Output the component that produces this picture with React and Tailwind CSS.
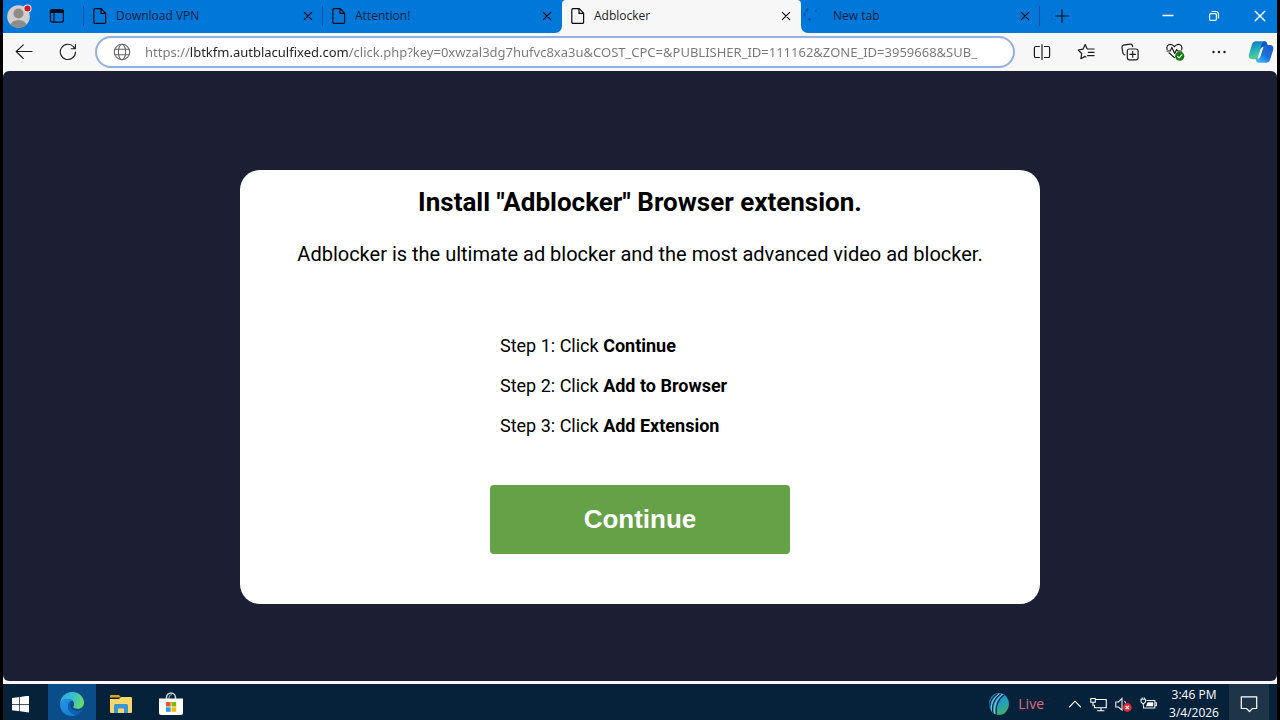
import React from 'react';

const URL_TEXT =
  'https://lbtkfm.autblaculfixed.com/click.php?key=0xwzal3dg7hufvc8xa3u&COST_CPC=&PUBLISHER_ID=111162&ZONE_ID=3959668&SUB_';

function Line({ size = 18, className = '', width = 1.2, children, box = 18 }) {
  return (
    <svg
      width={size}
      height={size}
      viewBox={`0 0 ${box} ${box}`}
      fill="none"
      stroke="currentColor"
      strokeWidth={width}
      strokeLinecap="round"
      strokeLinejoin="round"
      className={`shrink-0 ${className}`}
      aria-hidden="true"
    >
      {children}
    </svg>
  );
}

function PageIcon() {
  return (
    <Line size={16} box={16} width={1.2}>
      <path d="M3 .7h6.200l4.400 4.500v9a1.200 1.200 0 0 1-1.200 1.200H3a1.200 1.200 0 0 1-1.200-1.200V1.900A1.200 1.200 0 0 1 3 .7zM9 .9v4.500h4.500" />
    </Line>
  );
}

function SpinnerIcon() {
  return (
    <svg width="16" height="16" viewBox="0 0 16 16" className="shrink-0 text-[#07509f]" fill="currentColor" aria-hidden="true">
      <ellipse cx="6" cy="2" rx="1" ry="2" transform="rotate(35 6 2)" />
      <ellipse cx="3.500" cy="6.500" rx="1" ry="2" />
      <circle cx="15" cy="3" r="1" />
      <ellipse cx="8.500" cy="11.500" rx="1.700" ry="1.300" transform="rotate(40 8.500 11.500)" />
    </svg>
  );
}

function Tab({ title, active, loading, last }) {
  return (
    <li
      className={`relative flex w-[239px] min-w-0 items-center pl-2 pr-[7px] ${
        active ? 'h-[33px] rounded-t bg-[#f7f7f7] pb-px text-[#222]' : 'h-8 text-[#06203f]'
      }`}
    >
      {active && (
        <>
          <svg width="7" height="7" viewBox="0 0 7 7" className="absolute bottom-0 -left-[7px]" aria-hidden="true">
            <path d="M7 0v7H0a7 7 0 0 0 7-7z" fill="#f7f7f7" />
          </svg>
          <svg width="7" height="7" viewBox="0 0 7 7" className="absolute bottom-0 -right-[7px]" aria-hidden="true">
            <path d="M0 0v7h7a7 7 0 0 1-7-7z" fill="#f7f7f7" />
          </svg>
        </>
      )}
      <button type="button" className="flex min-w-0 flex-1 items-center gap-2 text-left">
        <span className={loading ? '-ml-2 mr-2 flex' : 'flex text-[#0a0a14]'}>{loading ? <SpinnerIcon /> : <PageIcon />}</span>
        <span className="truncate text-[12px] leading-5">{title}</span>
      </button>
      <button type="button" aria-label={`Close ${title}`} className="flex h-4 w-4 items-center justify-center text-[#0a0a14]">
        <Line size={10} box={10} width={1.2}>
          <path d="M1.300 1.300l7.400 7.400M8.700 1.300L1.300 8.700" />
        </Line>
      </button>
      {last && <span className="absolute right-0 h-5 w-px bg-[#07509f]" />}
    </li>
  );
}

function TabBar() {
  return (
    <header className="flex h-[33px] shrink-0 items-start bg-[#0078d9]">
      <div className="flex h-8 w-20 shrink-0 items-center">
        <button type="button" aria-label="Profile" className="ml-1 flex">
          <svg width="26" height="26" viewBox="0 0 26 26" aria-hidden="true">
            <clipPath id="face">
              <circle cx="11.5" cy="13.5" r="11.3" />
            </clipPath>
            <circle cx="11.5" cy="13.5" r="11.3" fill="#d0cecd" />
            <g clipPath="url(#face)" fill="#8e8b89">
              <circle cx="11.5" cy="10.5" r="5" />
              <ellipse cx="11.5" cy="22.5" rx="7.8" ry="5.5" />
            </g>
            <circle cx="20.5" cy="5.5" r="4" fill="#e9e9ee" />
            <circle cx="20.5" cy="5.5" r="3" fill="#d80f1e" />
          </svg>
        </button>
        <button type="button" aria-label="Tab actions" className="ml-4 flex text-[#04101f]">
          <svg width="16" height="16" viewBox="0 0 16 16" fill="none" stroke="currentColor" strokeWidth="1.2" aria-hidden="true">
            <rect x="1.4" y="1.6" width="13" height="12.6" rx="2" />
            <path d="M1.4 4.500V3.6a2 2 0 0 1 2-2h9a2 2 0 0 1 2 2v.9z" fill="currentColor" />
            <path d="M5 5v9" />
          </svg>
        </button>
      </div>
      <ul className="flex min-w-0 items-start">
        <li className="mt-1.5 h-5 w-px shrink-0 bg-[#07509f]" />
        <Tab title="Download VPN" last />
        <Tab title="Attention!" />
        <Tab title="Adblocker" active />
        <Tab title="New tab" loading last />
      </ul>
      <button type="button" aria-label="New tab" className="ml-3.5 flex h-8 items-center text-[#04101f]">
        <Line size={16} box={16} width={1.2}>
          <path d="M8 1.500v13M1.500 8h13" />
        </Line>
      </button>
      <div className="-mr-1.5 ml-auto flex h-8 shrink-0 text-white">
        <button type="button" aria-label="Minimize" className="flex w-[46px] items-center justify-center">
          <Line size={12} box={12} width={1.3}>
            <path d="M1 5.500h10" />
          </Line>
        </button>
        <button type="button" aria-label="Restore" className="flex w-[46px] items-center justify-center">
          <Line size={12} box={12} width={1.2}>
            <rect x="1.6" y="3.6" width="6.8" height="6.8" rx="1.2" />
            <path d="M4 1.5h4a2.5 2.5 0 0 1 2.5 2.5v4" />
          </Line>
        </button>
        <button type="button" aria-label="Close window" className="flex w-[46px] items-center justify-center">
          <Line size={12} box={12} width={1.4}>
            <path d="M1.2 1.2l9.6 9.6M10.8 1.2l-9.6 9.6" />
          </Line>
        </button>
      </div>
    </header>
  );
}

function CopilotIcon() {
  return (
    <svg width="26" height="26" viewBox="0 0 26 26" aria-hidden="true">
      <defs>
        <linearGradient id="cpA" x1="0" y1="0" x2="0.3" y2="1">
          <stop offset="0" stopColor="#1270c8" />
          <stop offset=".45" stopColor="#1fa6c4" />
          <stop offset="1" stopColor="#5fd08c" />
        </linearGradient>
        <linearGradient id="cpB" x1="1" y1="0" x2="0.3" y2="1">
          <stop offset="0" stopColor="#1f56c9" />
          <stop offset=".6" stopColor="#1c70dc" />
          <stop offset="1" stopColor="#3cb3f2" />
        </linearGradient>
      </defs>
      <path d="M8 2.3h8.5c1.7 0 2.5 1 3 2.6l.7 2.3h-3.4c-1.8 0-2.7 1-3.2 2.7l-2.6 8.3c-.4 1.300-1.200 2-2.500 2H4.200C1.200 20.200.300 18 1 15.300l3-10C4.600 3.300 6 2.300 8 2.300z" fill="url(#cpA)" />
      <path d="M18 23.700H11c-1.700 0-2.500-1-3-2.600L7.300 19h2c1.600 0 2.400-.9 2.900-2.500l2.700-8.400c.4-1.300 1.200-2 2.500-2h4.500c3 0 3.900 2.200 3.200 4.900l-3 9.700c-.6 2-2.100 3-4.100 3z" fill="url(#cpB)" />
      <path d="M15 8.200c.4-1.300 1.300-2.100 2.600-2.100h1.700l-.8-2c-.3-1-.9-1.700-2-1.800-1.500 0-2.300 1-2.800 2.600l-3 9.800z" fill="#1257bd" />
      <path d="M15.600 7.800l-3.200 9.600c-.5 1.400-1.300 2.300-2.900 2.400l2.300-8c.7-2.200 1.700-3.600 3.800-4z" fill="#e6f7fb" />
    </svg>
  );
}

function Toolbar() {
  return (
    <nav className="flex h-[38px] shrink-0 items-center bg-[#f7f7f7] text-[#1c1c1c]">
      <button type="button" aria-label="Back" className="ml-3 flex">
        <Line width={1.1}>
          <path d="M17 8.500H1.500M8.300 1.800L1.200 8.500l7.100 7" />
        </Line>
      </button>
      <button type="button" aria-label="Refresh" className="ml-[26px] flex">
        <Line width={1.1}>
          <path d="M16.500 9A7.600 7.600 0 1 1 14.700 4L16.200 5.600M16.400 1.500v4.200h-4.200" />
        </Line>
      </button>
      <div className="ml-[18px] flex h-8 min-w-0 flex-1 items-center rounded-full border-2 border-[#91afe3] bg-white px-4">
        <Line className="mr-3.5 text-[#666]" width={1.1}>
          <circle cx="9" cy="9" r="7.700" />
          <ellipse cx="9" cy="9" rx="3.600" ry="7.700" />
          <path d="M1.900 6.200h14.200M1.900 11.800h14.200" />
        </Line>
        <input
          type="text"
          aria-label="Address"
          defaultValue={URL_TEXT}
          className="min-w-0 flex-1 bg-[linear-gradient(to_right,#767676_45px,#1f1f1f_45px,#1f1f1f_203px,#767676_203px)] bg-clip-text font-['Noto_Sans',sans-serif] text-[13px] leading-6 text-transparent outline-none"
        />
      </div>
      <div className="ml-[18px] flex shrink-0 items-center gap-[26px]">
        <button type="button" aria-label="Split screen" className="flex">
          <Line>
            <path d="M9 1.500v15M6.500 3.500H3A1.600 1.600 0 0 0 1.400 5.100v7.800A1.600 1.600 0 0 0 3 14.500h3.500M11.500 3.500H15a1.600 1.600 0 0 1 1.600 1.600v7.800a1.600 1.600 0 0 1-1.600 1.600h-3.500" />
          </Line>
        </button>
        <button type="button" aria-label="Favorites" className="flex">
          <Line>
            <path d="M10.200 5.900L8.200 1.500 6 6.200l-4.800.8 3.500 3.500-.8 5.200 4.200-2.300.9.500M10.600 6h6.500M11.300 9.300h5.800M10.600 12.600h6.500" />
          </Line>
        </button>
        <button type="button" aria-label="Collections" className="flex">
          <Line>
            <rect x="6.300" y="6" width="10.800" height="10.800" rx="2" />
            <path d="M11.700 8.600v5.600M8.900 11.400h5.600M3.800 11.800l-.6-.2a2 2 0 0 1-1.300-1.600L1 4.300a2 2 0 0 1 1.600-2.200l6.600-1a2 2 0 0 1 2.200 1.400l.3 1.200" />
          </Line>
        </button>
        <button type="button" aria-label="Browser essentials" className="flex">
          <svg width="20" height="20" viewBox="0 0 20 20" fill="none" stroke="#1c1c1c" strokeWidth="1.200" strokeLinecap="round" strokeLinejoin="round" aria-hidden="true">
            <path d="M2.200 7.500C1 4.500 3 2.300 5.400 2.300c1.800 0 3 1 4 2.300 1-1.300 2.200-2.300 4-2.300 2.400 0 4.200 2.200 3.300 5.200M4 10.800l5.400 4.800" />
            <path d="M2 9h3.200l1.700-3.500 2.800 6 1.900-4L12.500 9h4" />
            <circle cx="14.700" cy="14.200" r="4.600" fill="#107c10" stroke="none" />
            <path d="M12.600 14.300l1.500 1.500 2.700-2.900" stroke="#fff" />
          </svg>
        </button>
        <button type="button" aria-label="Settings and more" className="flex">
          <svg width="16" height="18" viewBox="0 0 16 18" fill="#1c1c1c" aria-hidden="true">
            <circle cx="2.500" cy="9" r="1.200" />
            <circle cx="8" cy="9" r="1.200" />
            <circle cx="13.500" cy="9" r="1.200" />
          </svg>
        </button>
      </div>
      <button type="button" aria-label="Copilot" className="ml-[21px] mr-[3px] flex">
        <CopilotIcon />
      </button>
    </nav>
  );
}

const STEPS = [
  ['Step 1: Click', 'Continue'],
  ['Step 2: Click', 'Add to Browser'],
  ['Step 3: Click', 'Add Extension'],
];

function PageContent() {
  return (
    <main className="flex flex-1 flex-col items-center rounded-md bg-[#1c1e33] px-6 pt-[99px] font-[Roboto,sans-serif] text-black">
      <section className="flex w-full max-w-[800px] flex-col items-center rounded-[20px] bg-white px-6 pb-[50px] pt-4 text-center">
        <h1 className="text-[26px] font-bold leading-8">Install "Adblocker" Browser extension.</h1>
        <p className="mt-5 text-[20px] leading-8">
          Adblocker is the ultimate ad blocker and the most advanced video ad blocker.
        </p>
        <ol className="mt-14 w-[280px] text-left text-[18px] leading-10">
          {STEPS.map(([lead, target]) => (
            <li key={target}>
              {lead} <b className="font-bold">{target}</b>
            </li>
          ))}
        </ol>
        <button
          type="button"
          className="mt-[39px] h-[69px] w-[300px] rounded bg-[#65a146] font-['Liberation_Sans',sans-serif] text-[26px] font-bold text-white"
        >
          Continue
        </button>
      </section>
    </main>
  );
}

function EdgeIcon() {
  return (
    <svg width="26" height="26" viewBox="0 0 26 26" aria-hidden="true">
      <defs>
        <linearGradient id="edTop" x1="0" y1="0.4" x2="1" y2="0.6">
          <stop offset="0" stopColor="#2fa9e0" />
          <stop offset=".5" stopColor="#35c1d0" />
          <stop offset="1" stopColor="#6fdc5a" />
        </linearGradient>
        <linearGradient id="edLow" x1="0" y1="0" x2="1" y2="1">
          <stop offset="0" stopColor="#2497e3" />
          <stop offset="1" stopColor="#1279d2" />
        </linearGradient>
      </defs>
      <path d="M1 12.500C1.500 6 6.500 1 13 1c7 0 12 5 12 10.500 0 4-3 6.300-6.500 6.300-3 0-4.300-1.100-4.300-2 0-.7.900-1.100.900-2.900 0-3-2.800-5-6.300-5C5 7.900 2 10 1 12.500z" fill="url(#edTop)" />
      <path d="M1 13c.3-3.300 3.800-5.100 7.800-5.100 1.800 0 3.600.5 4.800 1.600-2.500.3-4.600 2.600-4.600 6.100 0 4.600 4 8 8.500 8.400-1.400.7-3 1-4.500 1C6 25 1 19.600 1 13z" fill="url(#edLow)" />
      <path d="M9 15.600c0-3.400 2-5.600 4.600-6.100-.9.800-2.300 2.200-2.300 4.500 0 3.500 3.300 6 7.300 6 1.800 0 3.200-.5 4.300-1 .4-.2.800.2.500.6A12 12 0 0 1 17.500 24C13 23.600 9 20.200 9 15.600z" fill="#1160b4" />
    </svg>
  );
}

function Taskbar() {
  return (
    <footer className="flex h-10 shrink-0 items-center bg-[#06213a] text-white">
      <button type="button" aria-label="Start" className="flex h-10 w-[45px] items-center pl-[9px]">
        <svg width="17" height="17" viewBox="0 0 17 17" fill="#fff" aria-hidden="true">
          <path d="M0 2l7.300-1V8H0zM8 .9L17-.4V8H8zM0 8.700h7.300v6.600L0 14.300zM8 8.700h9v7.700l-9-1.100z" />
        </svg>
      </button>
      <button type="button" aria-label="Microsoft Edge" className="flex h-10 w-12 items-center justify-center bg-[#0a4d88]">
        <EdgeIcon />
      </button>
      <button type="button" aria-label="File Explorer" className="flex h-10 w-[50px] items-center justify-center">
        <svg width="22" height="20" viewBox="0 0 22 20" aria-hidden="true">
          <path d="M0 2a1 1 0 0 1 1-1h8l2 2.500H0z" fill="#e0a21b" />
          <path d="M0 5h9l2-2h10a1 1 0 0 1 1 1v14a1 1 0 0 1-1 1H1a1 1 0 0 1-1-1z" fill="#fbd669" />
          <path d="M4 19v-7.500A1.500 1.500 0 0 1 5.500 10h11a1.500 1.500 0 0 1 1.500 1.500V19h-4v-4.500H8V19z" fill="#3a96d4" />
        </svg>
      </button>
      <button type="button" aria-label="Microsoft Store" className="flex h-10 w-[50px] items-center justify-center">
        <svg width="24" height="24" viewBox="0 0 24 24" aria-hidden="true">
          <path d="M7.500 8V5.500a4.500 4.500 0 0 1 9 0V8" fill="none" stroke="#c9d3da" strokeWidth="1.500" />
          <path d="M10 8V5.500a3.500 3.500 0 0 1 3-3" fill="none" stroke="#8fa0ac" strokeWidth="1.200" />
          <path d="M0 6.500h24V21a2 2 0 0 1-2 2H2a2 2 0 0 1-2-2z" fill="#fff" />
          <path d="M7 10h4.700v4.500H7z" fill="#f05125" />
          <path d="M12.500 10h4.700v4.500h-4.700z" fill="#7eb900" />
          <path d="M7 15.300h4.700v4.500H7z" fill="#21a1f1" />
          <path d="M12.500 15.300h4.700v4.500h-4.700z" fill="#fdb900" />
        </svg>
      </button>

      <div className="ml-auto flex h-10 items-center">
        <button type="button" className="flex items-center gap-2 text-[14px] leading-5 text-[#e06c7c]">
          <svg width="22" height="22" viewBox="0 0 22 22" fill="none" strokeLinecap="round" aria-hidden="true">
            <defs>
              <linearGradient id="globe" x1="0" y1="0" x2="0.6" y2="1">
                <stop offset="0" stopColor="#1688cf" />
                <stop offset=".6" stopColor="#209fc4" />
                <stop offset="1" stopColor="#3fae6b" />
              </linearGradient>
              <clipPath id="ball">
                <ellipse cx="11" cy="11" rx="10" ry="11" />
              </clipPath>
            </defs>
            <g clipPath="url(#ball)">
              <path d="M0 0h22v22H0z" fill="url(#globe)" />
              <g stroke="#06213a" strokeWidth="1.100">
                <path d="M2 17C1 11 3 5 9 1M5 20C3.500 13 6 6 12.500 1M8.500 22C7 14 10 6 16 2" />
              </g>
              <path d="M6.500 21.500C5.500 13 8 6 14.500 1.500M3.300 19C2.500 12 4.500 6 11 1" stroke="#b9e2ea" strokeWidth=".7" />
            </g>
          </svg>
          Live
        </button>
        <div className="ml-6 flex items-center gap-2">
          <button type="button" aria-label="Show hidden icons" className="flex">
            <Line size={14} box={14}>
              <path d="M1.500 9.800L7 4.200l5.500 5.600" />
            </Line>
          </button>
          <button type="button" aria-label="Network" className="flex">
            <Line size={17} box={17} width={1.100}>
              <path d="M6 3.500h10.300v8.300H4.500V9M11 12v2.500M7.500 14.800h6.500M.8 2.500h4.500v3.800H.8zM3 6.300v3.500" />
            </Line>
          </button>
          <button type="button" aria-label="Volume muted" className="flex">
            <svg width="17" height="17" viewBox="0 0 17 17" fill="none" aria-hidden="true">
              <path d="M.8 6v5h2.600L7 14V2.500L3.400 6zM9.500 5c.7.800 1 1.700 1 2.500" stroke="#e9eef2" strokeWidth="1.100" />
              <circle cx="12.300" cy="11.500" r="4.400" fill="#dc2b35" />
              <path d="M10.600 9.800l3.400 3.400M14 9.800l-3.400 3.400" stroke="#fff" strokeWidth="1.200" />
            </svg>
          </button>
          <button type="button" aria-label="Battery charging" className="flex">
            <svg width="17" height="17" viewBox="0 0 17 17" fill="none" stroke="#e9eef2" strokeWidth="1.100" aria-hidden="true">
              <path d="M6.500 4.500h8.300v7.500H3.500V9.500M15 6.800h1.400v3H15" />
              <path d="M7.500 6.300h5.700v4H6z" fill="#fff" stroke="none" />
              <path d="M1 3.300h4.500V6L3.900 7.500H2.600L1 6zM2.200 1.500v1.800M4.300 1.500v1.800M3.300 7.500v2.300" />
            </svg>
          </button>
        </div>
        <time dateTime="2026-03-04T15:46" className="ml-0.5 w-[70px] text-center text-[12px] leading-[18px]">
          3:46 PM
          <br />
          3/4/2026
        </time>
        <button type="button" aria-label="Notifications" className="mr-2 flex h-10 w-10 items-center justify-center bg-[#1e3548]">
          <Line size={18} width={1.200}>
            <path d="M1.300 1.800h15.400v11.700h-4.200L9.500 16.500l-3-3H1.300z" />
          </Line>
        </button>
      </div>
    </footer>
  );
}

export default function App() {
  return (
    <div className="h-screen overflow-hidden bg-black px-[3px] font-['Open_Sans','Noto_Sans',sans-serif]">
      <div className="flex h-[calc(100vh+4px)] flex-col bg-[#f7f7f7]">
        <TabBar />
        <Toolbar />
        <div className="flex flex-1 flex-col pb-[3px]">
          <PageContent />
        </div>
        <Taskbar />
      </div>
    </div>
  );
}
